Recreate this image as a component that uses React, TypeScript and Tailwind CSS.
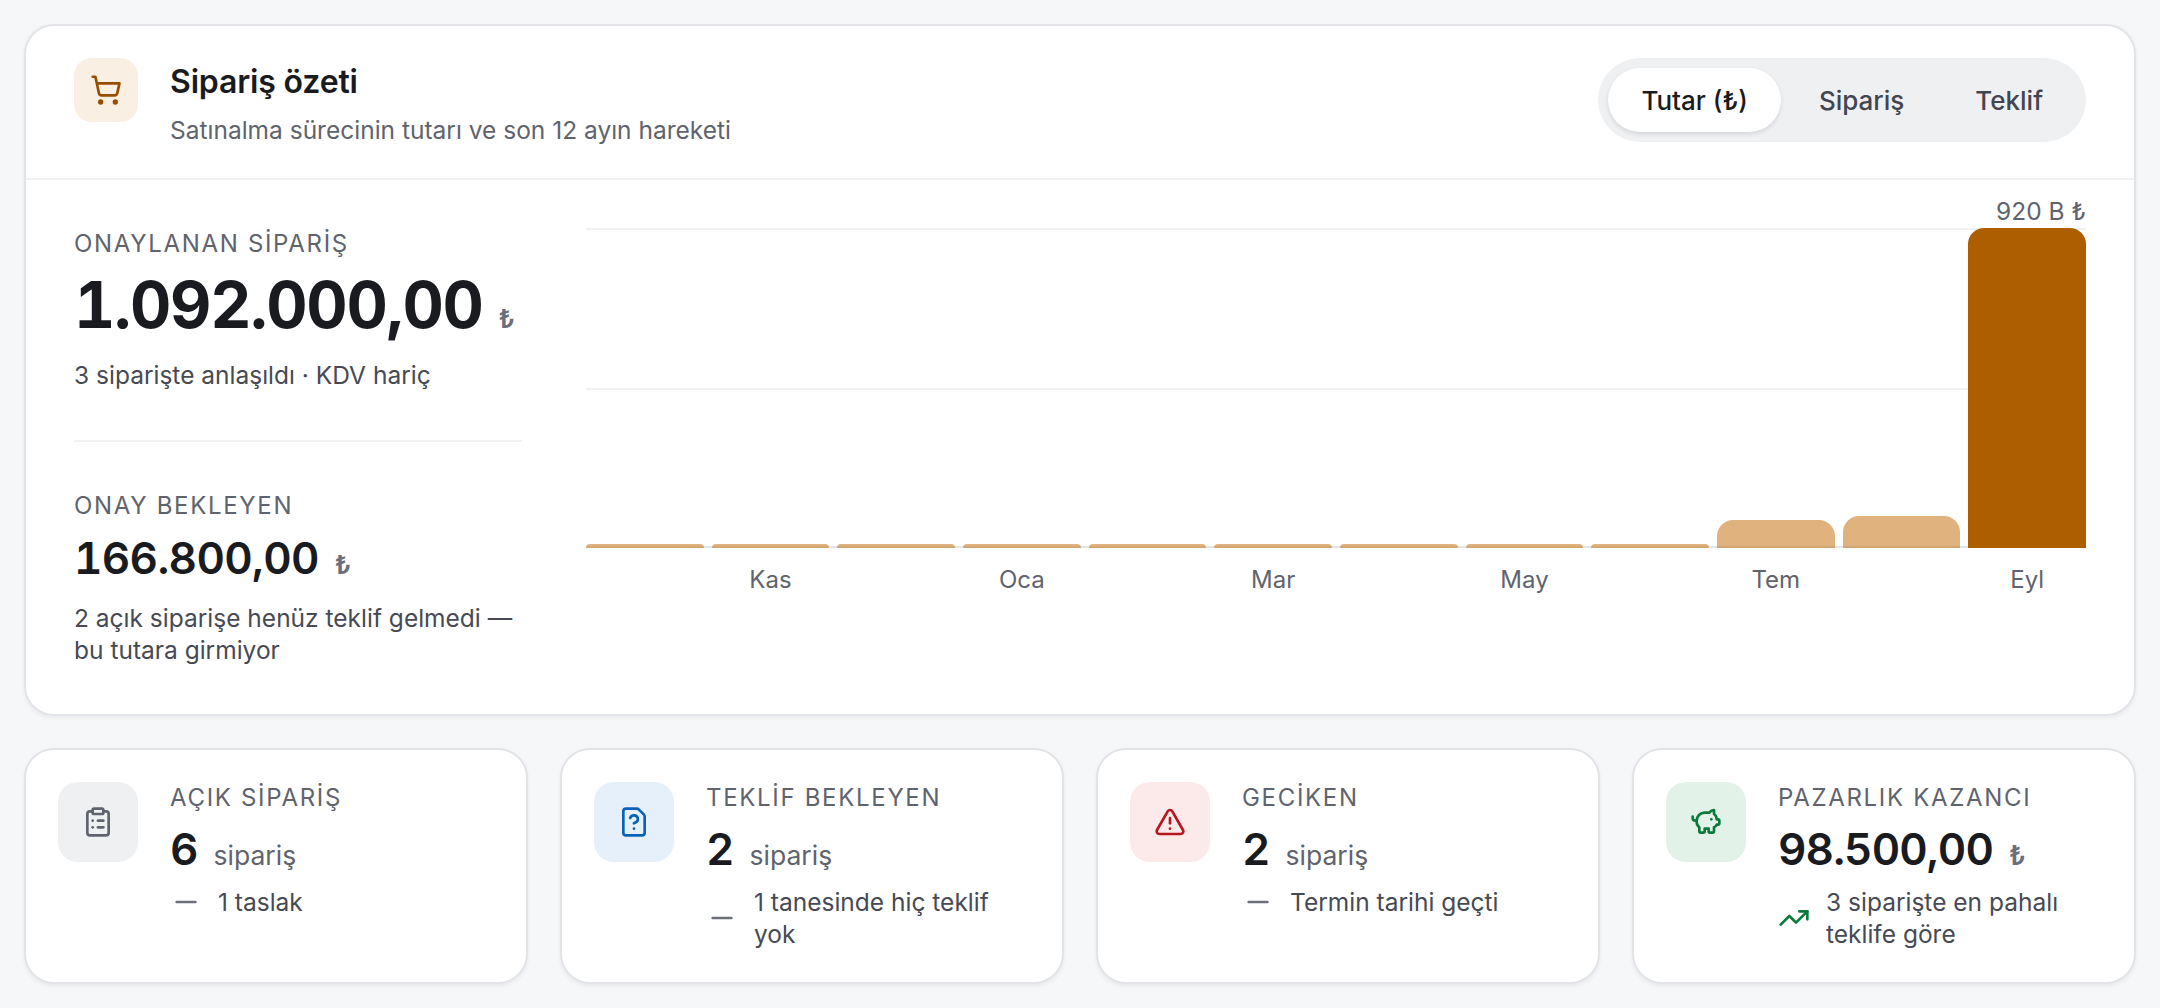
import {
  ClipboardList,
  FileQuestionMark,
  Minus,
  PiggyBank,
  ShoppingCart,
  TrendingUp,
  TriangleAlert,
} from "lucide-react";
import type { ReactNode } from "react";

const barHeights = [4, 4, 4, 4, 4, 4, 4, 4, 4, 28, 32];
const monthLabels = ["", "Kas", "", "Oca", "", "Mar", "", "May", "", "Tem", "", "Eyl"];

type StatCardProps = {
  icon: ReactNode;
  tile: string;
  label: string;
  value: string;
  unit: string;
  unitClass?: string;
  trend?: boolean;
  note: string;
};

function StatCard({ icon, tile, label, value, unit, unitClass = "text-[#5f636e]", trend, note }: StatCardProps) {
  return (
    <div className="flex h-[236px] gap-8 rounded-[30px] border-2 border-[#e2e4e8] bg-white p-8 shadow-[0_2px_4px_rgba(17,24,39,0.06)]">
      <div className={`flex h-20 w-20 shrink-0 items-center justify-center rounded-[20px] ${tile}`}>{icon}</div>
      <div className="min-w-0 flex-1">
        <div className="text-[24px] leading-8 tracking-[0.07em] text-[#5f636e]">{label}</div>
        <div className="mt-[5px] flex items-baseline gap-4">
          <span className="text-[44px] leading-[60px] font-semibold tracking-[-0.02em] text-[#1a1b20] tabular-nums">{value}</span>
          <span className={`text-[26.5px] ${unitClass}`}>{unit}</span>
        </div>
        <div className="mt-[7px] flex items-center gap-4 text-[24.5px] leading-8 text-[#474a54]">
          {trend ? (
            <TrendingUp size={32} className="shrink-0 text-[#0a7a3b]" />
          ) : (
            <Minus size={32} className="shrink-0 text-[#6b6f7a]" />
          )}
          <span>{note}</span>
        </div>
      </div>
    </div>
  );
}

export default function App() {
  return (
    <div className="flex min-h-[1008px] flex-col gap-8 bg-[#f6f7f9] p-6 font-['Inter',sans-serif]">
      <section className="rounded-[30px] border-2 border-[#e2e4e8] bg-white shadow-[0_2px_4px_rgba(17,24,39,0.06)]">
        <header className="flex h-[154px] items-start justify-between border-b-2 border-[#f0f1f3] px-12 pt-8">
          <div className="flex gap-8">
            <div className="flex h-16 w-16 items-center justify-center rounded-[18px] bg-[#f9efe3]">
              <ShoppingCart size={32} className="text-[#964f00]" />
            </div>
            <div>
              <h1 className="text-[32px] leading-[48px] font-semibold tracking-[-0.005em] text-[#1a1b20]">Sipariş özeti</h1>
              <p className="mt-[6px] text-[24.5px] leading-9 text-[#5f636e]">Satınalma sürecinin tutarı ve son 12 ayın hareketi</p>
            </div>
          </div>
          <div className="flex h-[84px] items-center gap-[5px] rounded-full bg-[#eff0f2] px-[10px] text-[26px]">
            <button type="button" className="h-16 rounded-full bg-white px-[33px] font-medium text-[#1a1b20] shadow-[0_2px_4px_rgba(17,24,39,0.12)]">
              Tutar (₺)
            </button>
            <button type="button" className="h-16 px-[33px] font-medium text-[#434650]">Sipariş</button>
            <button type="button" className="h-16 px-[33px] font-medium text-[#434650]">Teklif</button>
          </div>
        </header>

        <div className="flex gap-16 p-12">
          <div className="w-[448px] shrink-0">
            <div className="text-[24px] leading-8 tracking-[0.07em] text-[#5f636e]">ONAYLANAN SİPARİŞ</div>
            <div className="mt-[5px] flex items-baseline gap-4">
              <span className="text-[64px] leading-[80px] font-bold tracking-[-0.02em] text-[#1a1b20] tabular-nums">1.092.000,00</span>
              <span className="text-[26px] font-semibold text-[#6b6f7a]">₺</span>
            </div>
            <p className="mt-[14px] text-[24.5px] leading-8 text-[#474a54]">3 siparişte anlaşıldı · KDV hariç</p>
            <div className="mt-[49px] border-t-2 border-[#f0f1f3]" />
            <div className="mt-12 text-[24px] leading-8 tracking-[0.07em] text-[#5f636e]">ONAY BEKLEYEN</div>
            <div className="mt-1 flex items-baseline gap-4">
              <span className="text-[44px] leading-[64px] font-semibold tracking-[-0.015em] text-[#1a1b20] tabular-nums">166.800,00</span>
              <span className="text-[26px] font-semibold text-[#6b6f7a]">₺</span>
            </div>
            <p className="mt-3 text-[24.5px] leading-8 text-[#474a54]">2 açık siparişe henüz teklif gelmedi — bu tutara girmiyor</p>
          </div>

          <div className="min-w-0 flex-1">
            <div className="relative h-[320px] border-b-2 border-[#e2e4e8]">
              <div className="absolute inset-x-0 top-0 border-t-2 border-[#f0f1f3]" />
              <div className="absolute inset-x-0 top-[160px] border-t-2 border-[#f0f1f3]" />
              <div className="absolute right-0 -top-[33px] text-[24.5px] leading-8 text-[#5f636e]">920 B ₺</div>
              <div className="absolute inset-x-0 top-0 -bottom-[2px] grid grid-cols-12 items-end gap-2">
                {barHeights.map((height, index) => (
                  <div
                    key={index}
                    className="bg-[#c77514]/55"
                    style={{ height, borderTopLeftRadius: height < 10 ? 4 : 16, borderTopRightRadius: height < 10 ? 4 : 16 }}
                  />
                ))}
                <div className="h-full rounded-t-[16px] bg-[#ad5f00]" />
              </div>
            </div>
            <div className="mt-4 grid grid-cols-12 gap-2">
              {monthLabels.map((month, index) => (
                <div key={index} className="h-8 text-center text-[24px] leading-8 text-[#5f636e]">{month}</div>
              ))}
            </div>
          </div>
        </div>
      </section>

      <div className="grid grid-cols-4 gap-8">
        <StatCard
          icon={<ClipboardList size={32} className="text-[#5f636e]" />}
          tile="bg-[#eff0f2]"
          label="AÇIK SİPARİŞ"
          value="6"
          unit="sipariş"
          note="1 taslak"
        />
        <StatCard
          icon={<FileQuestionMark size={32} className="text-[#0a62b8]" />}
          tile="bg-[#e6f0fb]"
          label="TEKLİF BEKLEYEN"
          value="2"
          unit="sipariş"
          note="1 tanesinde hiç teklif yok"
        />
        <StatCard
          icon={<TriangleAlert size={32} className="text-[#b3191f]" />}
          tile="bg-[#fce9ea]"
          label="GECİKEN"
          value="2"
          unit="sipariş"
          note="Termin tarihi geçti"
        />
        <StatCard
          icon={<PiggyBank size={32} className="text-[#0a7a3b]" />}
          tile="bg-[#e3f2e9]"
          label="PAZARLIK KAZANCI"
          value="98.500,00"
          unit="₺"
          unitClass="font-semibold text-[#6b6f7a]"
          trend
          note="3 siparişte en pahalı teklife göre"
        />
      </div>
    </div>
  );
}
